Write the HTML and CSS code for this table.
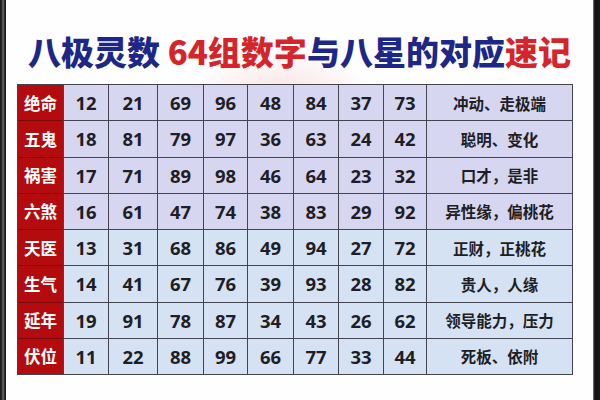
FILE: index.html
```html
<!DOCTYPE html>
<html lang="zh-CN">
<head>
<meta charset="utf-8">
<link rel="stylesheet" href="styles.css">
</head>
<body>
<div class="frame">
  <div class="edge edge-left"></div>
  <main class="sheet">
    <h1 class="title"><span class="navy">八极灵数</span> <span class="red">64组数字</span><span class="navy">与八星的对应</span><span class="red">速记</span></h1>
    <div class="grid">
      <div class="lbl">绝命</div><div class="n a">12</div><div class="n a">21</div><div class="n a">69</div><div class="n a">96</div><div class="n a">48</div><div class="n a">84</div><div class="n a">37</div><div class="n a">73</div><div class="t a">冲动、走极端</div>
      <div class="lbl">五鬼</div><div class="n a">18</div><div class="n a">81</div><div class="n a">79</div><div class="n a">97</div><div class="n a">36</div><div class="n a">63</div><div class="n a">24</div><div class="n a">42</div><div class="t a">聪明、变化</div>
      <div class="lbl">祸害</div><div class="n a">17</div><div class="n a">71</div><div class="n a">89</div><div class="n a">98</div><div class="n a">46</div><div class="n a">64</div><div class="n a">23</div><div class="n a">32</div><div class="t a">口才，是非</div>
      <div class="lbl">六煞</div><div class="n a">16</div><div class="n a">61</div><div class="n a">47</div><div class="n a">74</div><div class="n a">38</div><div class="n a">83</div><div class="n a">29</div><div class="n a">92</div><div class="t a">异性缘，偏桃花</div>
      <div class="lbl">天医</div><div class="n b">13</div><div class="n b">31</div><div class="n b">68</div><div class="n b">86</div><div class="n b">49</div><div class="n b">94</div><div class="n b">27</div><div class="n b">72</div><div class="t b">正财，正桃花</div>
      <div class="lbl">生气</div><div class="n b">14</div><div class="n b">41</div><div class="n b">67</div><div class="n b">76</div><div class="n b">39</div><div class="n b">93</div><div class="n b">28</div><div class="n b">82</div><div class="t b">贵人，人缘</div>
      <div class="lbl">延年</div><div class="n b">19</div><div class="n b">91</div><div class="n b">78</div><div class="n b">87</div><div class="n b">34</div><div class="n b">43</div><div class="n b">26</div><div class="n b">62</div><div class="t b">领导能力，压力</div>
      <div class="lbl last">伏位</div><div class="n b">11</div><div class="n b">22</div><div class="n b">88</div><div class="n b">99</div><div class="n b">66</div><div class="n b">77</div><div class="n b">33</div><div class="n b">44</div><div class="t b">死板、依附</div>
    </div>
  </main>
  <div class="edge edge-right"></div>
</div>
</body>
</html>
```

FILE: styles.css
```css
html, body {
  margin: 0;
  padding: 0;
}
body {
  width: 600px;
  height: 400px;
  overflow: hidden;
  font-family: "Open Sans", "Noto Sans CJK SC", sans-serif;
}
.frame {
  display: flex;
  width: 600px;
  height: 400px;
}
.edge-left {
  width: 6px;
  background: linear-gradient(to right, #1a1a1a 0, #2a2a2a 2px, #7a7a7a 3px, #3a3a3a 4px, #111 6px);
}
.edge-right {
  width: 7px;
  background: linear-gradient(to right, #8a8a8a 0, #3a3a3a 1px, #111 2px, #1a1a1a 7px);
}
.sheet {
  flex: 1;
  background:
    radial-gradient(ellipse 90px 40px at 275px 92px, rgba(245, 205, 205, 0.55), rgba(255, 255, 255, 0) 100%),
    #fefefe;
  padding: 31px 20px 0 11px;
  box-sizing: border-box;
}
.title {
  margin: 0 0 13px 9px;
  height: 40px;
  line-height: 40px;
  font-family: "Noto Sans CJK SC", sans-serif;
  font-weight: 900;
  font-size: 33px;
  letter-spacing: 0;
  text-align: center;
  white-space: nowrap;
}
.navy { color: #1d2788; }
.red { color: #d5252a; }
.grid {
  display: grid;
  grid-template-columns: 45px 44px 48px 45px 43px 45px 44px 44px 42px 145px;
  grid-template-rows: repeat(8, 1fr);
  gap: 1px;
  padding: 1px;
  width: 556px;
  height: 291px;
  box-sizing: border-box;
  background: #44444f;
}
.lbl {
  background: #b40c0e;
  color: #fff;
  font-family: "Noto Sans CJK SC", sans-serif;
  font-weight: 700;
  font-size: 16.5px;
  display: flex;
  align-items: center;
  justify-content: center;
  box-shadow: 0 1px 0 #7e0a0a;
}
.lbl.last { box-shadow: none; }
.n, .t {
  display: flex;
  align-items: center;
  justify-content: center;
  color: #1e1e24;
}
.n {
  font-family: "Open Sans", sans-serif;
  font-weight: 700;
  font-size: 18.5px;
}
.t {
  font-family: "Noto Sans CJK SC", sans-serif;
  font-weight: 700;
  font-size: 15.5px;
}
.a { background: #d6d6f0; }
.b { background: #d5e2f3; }
```
